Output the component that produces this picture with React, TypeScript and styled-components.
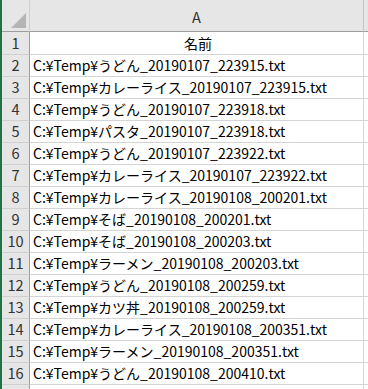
import styled, { createGlobalStyle } from "styled-components"

const GlobalStyle = createGlobalStyle`
    html, body {
        margin: 0;
        padding: 0;
        background: #ffffff;
        overflow: hidden;
    }
    body {
        font-family: "Noto Sans CJK JP", "Noto Sans", sans-serif;
    }
`

const rows: string[] = [
    "",
    "C:¥Temp¥うどん_20190107_223915.txt",
    "C:¥Temp¥カレーライス_20190107_223915.txt",
    "C:¥Temp¥うどん_20190107_223918.txt",
    "C:¥Temp¥パスタ_20190107_223918.txt",
    "C:¥Temp¥うどん_20190107_223922.txt",
    "C:¥Temp¥カレーライス_20190107_223922.txt",
    "C:¥Temp¥カレーライス_20190108_200201.txt",
    "C:¥Temp¥そば_20190108_200201.txt",
    "C:¥Temp¥そば_20190108_200203.txt",
    "C:¥Temp¥ラーメン_20190108_200203.txt",
    "C:¥Temp¥うどん_20190108_200259.txt",
    "C:¥Temp¥カツ丼_20190108_200259.txt",
    "C:¥Temp¥カレーライス_20190108_200351.txt",
    "C:¥Temp¥ラーメン_20190108_200351.txt",
    "C:¥Temp¥うどん_20190108_200410.txt",
]

export default function App() {
    return (
        <>
            <GlobalStyle />
            <Sheet>
                <Corner>
                    <svg width="16" height="16" viewBox="0 0 16 16">
                        <polygon points="15,0 15,15 0,15" fill="#b5b5b5" />
                    </svg>
                </Corner>
                <ColHead>A</ColHead>
                <ColHead $last />
                {rows.map((text, i) => (
                    <Row key={i}>
                        <RowHead $first={i === 0}>{i + 1}</RowHead>
                        <Cell $first={i === 0} $center={i === 0}>
                            {i === 0 ? "名前" : text}
                        </Cell>
                        <Cell $first={i === 0} $last />
                    </Row>
                ))}
                <Row>
                    <RowHead $first={false} />
                    <Cell $first={false} />
                    <Cell $first={false} $last />
                </Row>
            </Sheet>
        </>
    )
}

const Sheet = styled.div`
    display: grid;
    grid-template-columns: 28px 334px 1fr;
    width: 368px;
    height: 389px;
    box-sizing: border-box;
    border-left: 2px solid #217346;
    overflow: hidden;
    color: #000;
    font-size: 14px;
`

const Row = styled.div`
    display: contents;
`

const Corner = styled.div`
    height: 32px;
    box-sizing: border-box;
    background: #e6e6e6;
    border-bottom: 1px solid #9e9e9e;
    border-right: 1px solid #cfcfcf;
    display: flex;
    align-items: flex-end;
    justify-content: flex-end;
    padding: 0 2px 2px 0;
`

const ColHead = styled.div<{ $last?: boolean }>`
    height: 32px;
    box-sizing: border-box;
    background: #e6e6e6;
    border-bottom: 1px solid #9e9e9e;
    border-right: ${p => (p.$last ? "none" : "1px solid #c6c6c6")};
    display: flex;
    align-items: flex-end;
    justify-content: center;
    padding-bottom: 5px;
    color: #333;
    line-height: 18px;
    font-size: 14.6px;
`

const RowHead = styled.div<{ $first: boolean }>`
    height: ${p => (p.$first ? "23px" : "22px")};
    box-sizing: border-box;
    background: #e6e6e6;
    border-right: 1px solid #9e9e9e;
    border-bottom: 1px solid #d0d0d0;
    display: flex;
    align-items: flex-end;
    justify-content: center;
    padding-bottom: 1px;
    color: #333;
    line-height: 20px;
    font-size: 14.6px;
`

const Cell = styled.div<{ $first: boolean; $center?: boolean; $last?: boolean }>`
    height: ${p => (p.$first ? "23px" : "22px")};
    box-sizing: border-box;
    border-right: ${p => (p.$last ? "none" : "1px solid #d4d4d4")};
    border-bottom: 1px solid #d4d4d4;
    display: flex;
    align-items: flex-end;
    justify-content: ${p => (p.$center ? "center" : "flex-start")};
    padding: 0 0 1px 3px;
    white-space: nowrap;
    overflow: hidden;
    line-height: 20px;
`
